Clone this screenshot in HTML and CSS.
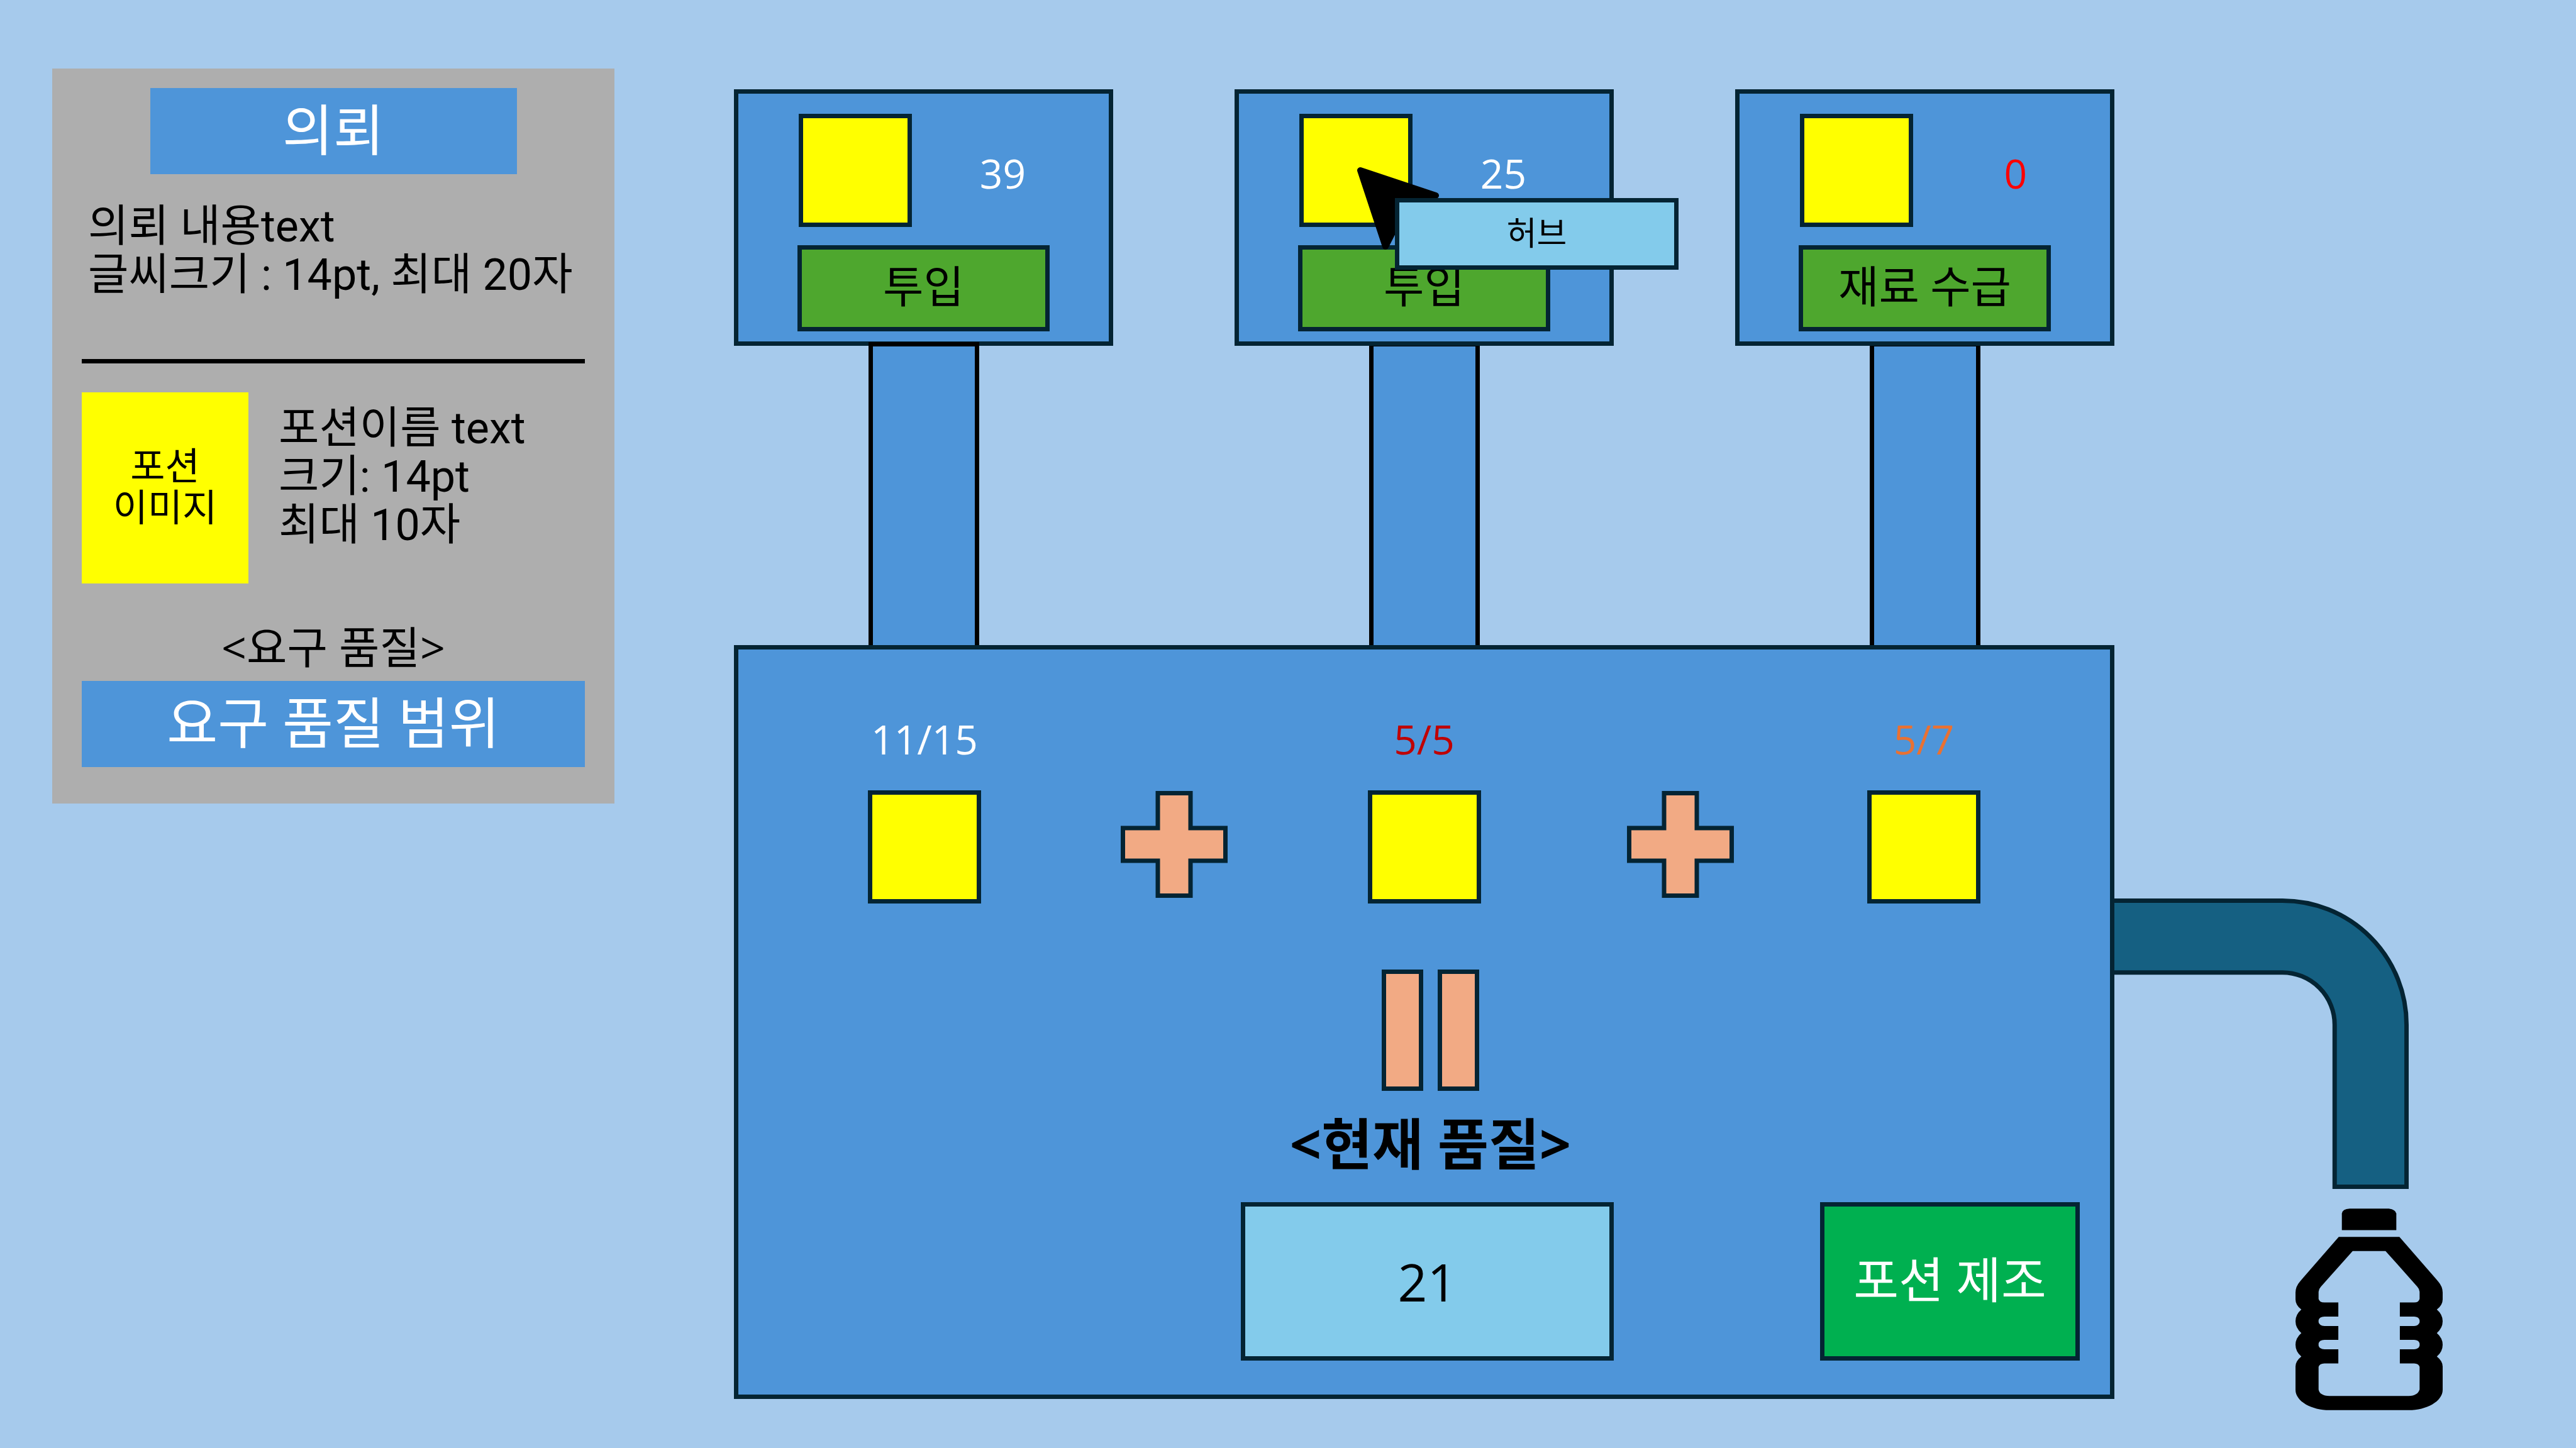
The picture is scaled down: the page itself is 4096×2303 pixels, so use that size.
FILE: index.html
```html
<!DOCTYPE html>
<html lang="ko">
<head>
<meta charset="utf-8">
<title>포션 제조</title>
<link rel="stylesheet" href="styles.css">
</head>
<body>
<main class="page">
  <aside class="quest">
    <h1 class="banner quest-title">의뢰</h1>
    <p class="quest-text">의뢰 내용text<br>글씨크기 : 14pt, 최대 20자</p>
    <hr class="divider">
    <div class="potion">
      <div class="potion-image">포션<br>이미지</div>
      <p class="potion-text">포션이름 text<br>크기: 14pt<br>최대 10자</p>
    </div>
    <h2 class="quality-label">&lt;요구 품질&gt;</h2>
    <div class="banner">요구 품질 범위</div>
  </aside>

  <section class="machine">
    <div class="stations">
      <div class="station">
        <div class="card">
          <div class="stock"><div class="item"></div><span class="count">39</span></div>
          <button class="action" type="button">투입</button>
        </div>
        <div class="pipe pipe-front"></div>
      </div>
      <div class="station">
        <div class="card hovered">
          <div class="stock"><div class="item"></div><span class="count">25</span></div>
          <button class="action" type="button">투입</button>
          <svg class="cursor" viewBox="0 0 132 134" aria-hidden="true"><path d="M6 6 L126 46 L76 68 L46 127 Z" stroke="#000" stroke-width="10" stroke-linejoin="round"/></svg>
          <div class="tooltip" role="tooltip">허브</div>
        </div>
        <div class="pipe"></div>
      </div>
      <div class="station">
        <div class="card">
          <div class="stock"><div class="item"></div><span class="count empty">0</span></div>
          <button class="action" type="button">재료 수급</button>
        </div>
        <div class="pipe"></div>
      </div>
    </div>

    <div class="mixer">
      <div class="slots">
        <div class="slot"><span class="amount">11/15</span><div class="item"></div></div>
        <svg class="plus" viewBox="0 0 170 170" aria-hidden="true"><path d="M59 3.500H111V59H166.500V111H111V166.500H59V111H3.500V59H59Z" fill="#f2aa84" stroke="#042433" stroke-width="7"/></svg>
        <div class="slot"><span class="amount full">5/5</span><div class="item"></div></div>
        <svg class="plus plus-last" viewBox="0 0 170 170" aria-hidden="true"><path d="M59 3.500H111V59H166.500V111H111V166.500H59V111H3.500V59H59Z" fill="#f2aa84" stroke="#042433" stroke-width="7"/></svg>
        <div class="slot"><span class="amount low">5/7</span><div class="item"></div></div>
      </div>
      <div class="equals"><div class="bar"></div><div class="bar"></div></div>
      <h2 class="result-label">&lt;현재 품질&gt;</h2>
      <div class="result-row">
        <output class="result">21</output>
        <button class="brew" type="button">포션 제조</button>
      </div>
    </div>
  </section>

  <div class="outlet">
    <svg class="elbow" viewBox="3387 1440 471 465" aria-hidden="true"><path d="M3380 1443.500H3656A198.500 198.500 0 0 1 3854.500 1642V1901.500H3739.500V1642A83.500 83.500 0 0 0 3656 1558.500H3380" fill="#156082" stroke="#042433" stroke-width="7"/></svg>
    <svg class="bottle" viewBox="111 108 708 970" aria-hidden="true">
      <path d="M334 212V132Q336 110 372 108H560Q592 112 596 132V212Z"/>
      <path fill-rule="evenodd" d="M319 244H611L797 458Q819 483 819 512V545Q819 572 791 594Q819 618 819 650Q819 683 791 707Q819 731 819 763Q819 796 791 820Q819 842 819 868V980C819 1036 740 1078 656 1078H274C190 1078 111 1036 111 980V868Q111 842 139 820Q111 796 111 763Q111 731 139 707Q111 683 111 650Q111 618 139 594Q111 572 111 545V512Q111 483 133 458ZM386 312L233 484Q222 496 222 508V542Q226 560 250 560H317V628H250Q226 629 222 645V655Q226 672 250 673H317V740H250Q226 741 222 757V768Q226 784 250 785H317V853H250Q226 854 222 870V978Q226 1008 274 1010H656Q700 1008 708 978V870Q704 854 682 853H613V785H682Q704 784 708 768V757Q704 741 682 740H613V673H682Q704 672 708 655V645Q704 629 682 628H613V560H682Q704 560 708 542V508Q708 496 697 484L544 312Z"/>
    </svg>
  </div>
</main>
</body>
</html>
```
FILE: styles.css
```css
* {
  box-sizing: border-box;
}

body {
  margin: 0;
  background: #a6caec;
  color: #000;
  font-family: Roboto, "Noto Sans CJK KR", sans-serif;
  font-size: 70px;
  line-height: 77px;
}

h1,
h2,
p {
  margin: 0;
  font-size: inherit;
  font-weight: 400;
}

button {
  padding: 0;
  font: inherit;
  color: inherit;
  cursor: pointer;
}

.page {
  display: flex;
  align-items: flex-start;
  min-height: 100vh;
  padding: 109px 0 60px 83px;
}

/* Quest panel */
.quest {
  flex: none;
  width: 894px;
  padding: 31px 47px 58px;
  background: #aeaeae;
}

.banner {
  display: flex;
  align-items: center;
  justify-content: center;
  height: 137px;
  background: #4e95d9;
  color: #fff;
  font-size: 88px;
}

.quest-title {
  width: 583px;
  margin: 0 auto;
  font-size: 88px;
}

.quest-text {
  margin-top: 45px;
  padding-left: 10px;
  white-space: nowrap;
}

.divider {
  height: 7px;
  margin: 95px 0 46px;
  border: 0;
  background: #000;
}

.potion {
  display: flex;
  gap: 48px;
}

.potion-image {
  display: flex;
  align-items: center;
  justify-content: center;
  width: 265px;
  height: 304px;
  background: #ff0;
  font-size: 60px;
  line-height: 66px;
  text-align: center;
}

.potion-text {
  padding-top: 19px;
}

.quality-label {
  margin: 63px 0 15px;
  font-family: "Open Sans", "Noto Sans CJK KR", sans-serif;
  text-align: center;
}

/* Ingredient stations */
.machine {
  flex: 1;
  margin: 33px 0 0 190px;
}

.stations {
  display: flex;
  justify-content: space-between;
}

.station {
  display: flex;
  flex-direction: column;
  align-items: center;
  width: 603px;
}

.card {
  position: relative;
  z-index: 1;
  width: 100%;
  height: 408px;
  padding: 32px 94px 0;
  border: 7px solid #042433;
  background: #4e95d9;
}

.hovered {
  z-index: 3;
}

.stock {
  display: flex;
  align-items: center;
  justify-content: space-between;
  padding: 0 38px 0 2px;
}

.item {
  width: 180px;
  height: 180px;
  border: 7px solid #042433;
  background: #ff0;
}

.count,
.amount {
  color: #fff;
  font-family: "Open Sans", sans-serif;
  font-size: 64px;
  line-height: 90px;
}

.count {
  padding-top: 9px;
}

.empty {
  color: #f00;
}

.action {
  display: block;
  width: 100%;
  height: 137px;
  margin-top: 29px;
  border: 7px solid #042433;
  background: #4ea72e;
}

.pipe {
  width: 176px;
  height: 482px;
  margin-top: -6px;
  border: 7px solid #000;
  border-bottom: 0;
  background: #4e95d9;
}

.pipe-front {
  position: relative;
  z-index: 2;
}

.cursor {
  position: absolute;
  top: 116px;
  left: 187px;
  width: 132px;
  height: 134px;
}

.tooltip {
  position: absolute;
  top: 166px;
  left: 248px;
  display: flex;
  align-items: center;
  justify-content: center;
  width: 451px;
  height: 114px;
  border: 7px solid #042433;
  background: #83cbeb;
  font-size: 52px;
}

/* Mixer */
.mixer {
  padding: 98px 0 54px;
  border: 7px solid #042433;
  background: #4e95d9;
}

.slots {
  display: grid;
  grid-template-columns: 180px 1fr 180px 1fr 180px;
  align-items: end;
  padding: 0 206px;
}

.slot {
  display: flex;
  flex-direction: column;
  align-items: center;
  gap: 36px;
}

.full {
  color: #c00000;
}

.low {
  color: #e97132;
}

.plus {
  justify-self: center;
  width: 170px;
  height: 170px;
  margin-bottom: 9px;
}

.plus-last {
  margin-left: 20px;
}

.equals {
  display: flex;
  justify-content: center;
  gap: 23px;
  margin-top: 105px;
  padding-left: 20px;
}

.bar {
  width: 66px;
  height: 193px;
  border: 7px solid #042433;
  background: #f2aa84;
}

.result-label {
  margin: 38px 0 49px;
  padding-left: 20px;
  font-family: "Open Sans", "Noto Sans CJK KR", sans-serif;
  font-size: 88px;
  font-weight: 700;
  line-height: 90px;
  text-align: center;
}

.result-row {
  display: grid;
  grid-template-columns: 1fr 593px 1fr;
  padding-left: 10px;
}

.result,
.brew {
  display: flex;
  align-items: center;
  justify-content: center;
  height: 252px;
  border: 7px solid #042433;
}

.result {
  grid-column: 2;
  background: #83cbeb;
  font-family: "Open Sans", sans-serif;
  font-size: 82px;
}

.brew {
  justify-self: end;
  width: 413px;
  margin-right: 48px;
  background: #00b050;
  color: #fff;
  font-size: 78px;
}

/* Outlet pipe and bottle */
.outlet {
  flex: none;
  align-self: flex-end;
  width: 734px;
}

.elbow {
  display: block;
  width: 468px;
  height: 462px;
}

.bottle {
  display: block;
  width: 234px;
  height: 321px;
  margin: 31px 0 0 288px;
}
```
